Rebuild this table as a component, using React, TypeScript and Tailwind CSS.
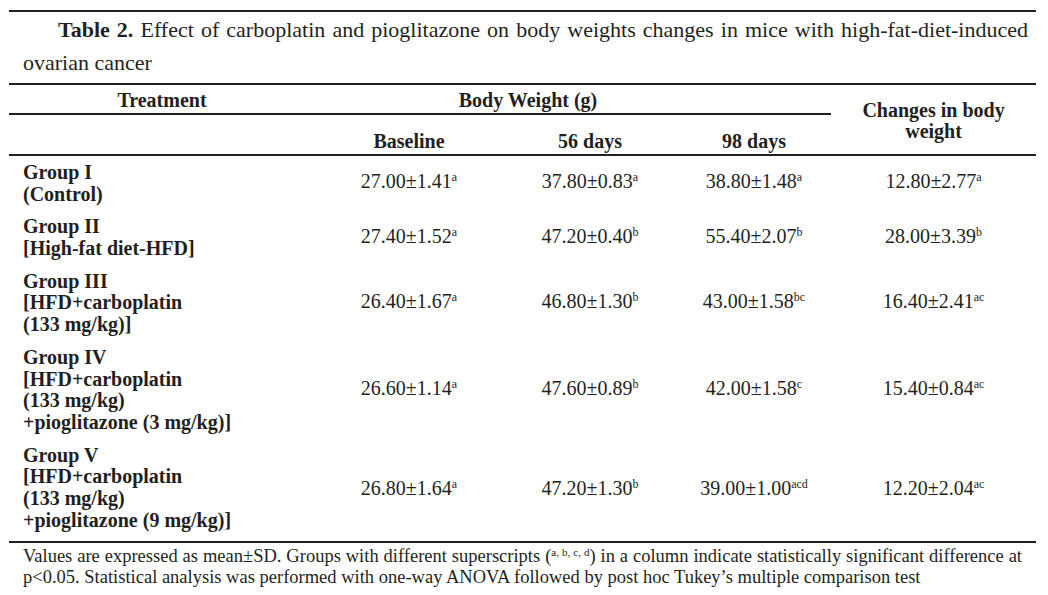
import React from "react";

type Row = {
  label: string[];
  values: [string, string][];
};

const rows: Row[] = [
  {
    label: ["Group I", "(Control)"],
    values: [
      ["27.00±1.41", "a"],
      ["37.80±0.83", "a"],
      ["38.80±1.48", "a"],
      ["12.80±2.77", "a"],
    ],
  },
  {
    label: ["Group II", "[High-fat diet-HFD]"],
    values: [
      ["27.40±1.52", "a"],
      ["47.20±0.40", "b"],
      ["55.40±2.07", "b"],
      ["28.00±3.39", "b"],
    ],
  },
  {
    label: ["Group III", "[HFD+carboplatin", "(133 mg/kg)]"],
    values: [
      ["26.40±1.67", "a"],
      ["46.80±1.30", "b"],
      ["43.00±1.58", "bc"],
      ["16.40±2.41", "ac"],
    ],
  },
  {
    label: ["Group IV", "[HFD+carboplatin", "(133 mg/kg)", "+pioglitazone (3 mg/kg)]"],
    values: [
      ["26.60±1.14", "a"],
      ["47.60±0.89", "b"],
      ["42.00±1.58", "c"],
      ["15.40±0.84", "ac"],
    ],
  },
  {
    label: ["Group V", "[HFD+carboplatin", "(133 mg/kg)", "+pioglitazone (9 mg/kg)]"],
    values: [
      ["26.80±1.64", "a"],
      ["47.20±1.30", "b"],
      ["39.00±1.00", "acd"],
      ["12.20±2.04", "ac"],
    ],
  },
];

const line = "border-[#231f20]";

export default function App() {
  return (
    <div
      className="min-h-[595px] w-[1048px] bg-white pl-[9px] pr-[12px] pt-[10px] text-[#231f20]"
      style={{ fontFamily: '"Liberation Serif", "Times New Roman", serif' }}
    >
      <div className={`border-t-2 ${line} pl-[14px] pr-[8px] pt-[1px] pb-[4px]`}>
        <p className="indent-[35px] text-justify text-[22px] leading-[33px]">
          <span className="font-bold">Table 2.</span> Effect of carboplatin and pioglitazone on body weights changes in mice with{" "}
          <span className="whitespace-nowrap">high-fat-diet-induced</span> ovarian cancer
        </p>
      </div>

      <table className="w-[1027px] table-fixed border-collapse text-[20px] leading-[21.7px]">
        <colgroup>
          <col className="w-[306px]" />
          <col className="w-[188px]" />
          <col className="w-[174px]" />
          <col className="w-[154px]" />
          <col className="w-[205px]" />
        </colgroup>
        <thead>
          <tr className={`border-t-2 ${line}`}>
            <th className={`border-b-2 ${line} pt-[5px] pb-[1px] text-center font-bold`}>Treatment</th>
            <th colSpan={3} className={`border-b-2 ${line} pt-[5px] pb-[1px] pr-[90px] text-center font-bold`}>
              Body Weight (g)
            </th>
            <th rowSpan={2} className={`border-b-2 ${line} px-[28px] pt-[2px] align-middle text-center font-bold leading-[21px]`}>
              Changes in body weight
            </th>
          </tr>
          <tr className={`border-b-2 ${line}`}>
            <th className="pt-[16px] pb-[2px]"></th>
            <th className="pt-[16px] pb-[2px] text-center font-bold">Baseline</th>
            <th className="pt-[16px] pb-[2px] text-center font-bold">56 days</th>
            <th className="pt-[16px] pb-[2px] text-center font-bold">98 days</th>
          </tr>
        </thead>
        <tbody>
          {rows.map((r, i) => (
            <tr key={i} className={i === rows.length - 1 ? `border-b-2 ${line}` : ""}>
              <td
                className={`pl-[14px] pt-[5.5px] font-bold ${
                  i === rows.length - 1 ? "pb-[10px]" : "pb-[5.5px]"
                }`}
              >
                {r.label.map((l, j) => (
                  <div key={j} className="whitespace-nowrap">
                    {l}
                  </div>
                ))}
              </td>
              {r.values.map(([v, s], j) => (
                <td key={j} className="text-center align-middle">
                  <span>
                    {v}
                    <span className="relative -top-[7px] text-[12px]">{s}</span>
                  </span>
                </td>
              ))}
            </tr>
          ))}
        </tbody>
      </table>

      <p className="pl-[14px] pr-[14px] pt-[3px] text-justify text-[18.5px] leading-[21px]">
        Values are expressed as mean±SD. Groups with different superscripts (
        <span className="relative -top-[6px] text-[11px] leading-[0]">a, b, c, d</span>) in a column indicate
        statistically significant difference at p&lt;0.05. Statistical analysis was performed with one-way ANOVA
        followed by post hoc Tukey’s multiple comparison test
      </p>
    </div>
  );
}
